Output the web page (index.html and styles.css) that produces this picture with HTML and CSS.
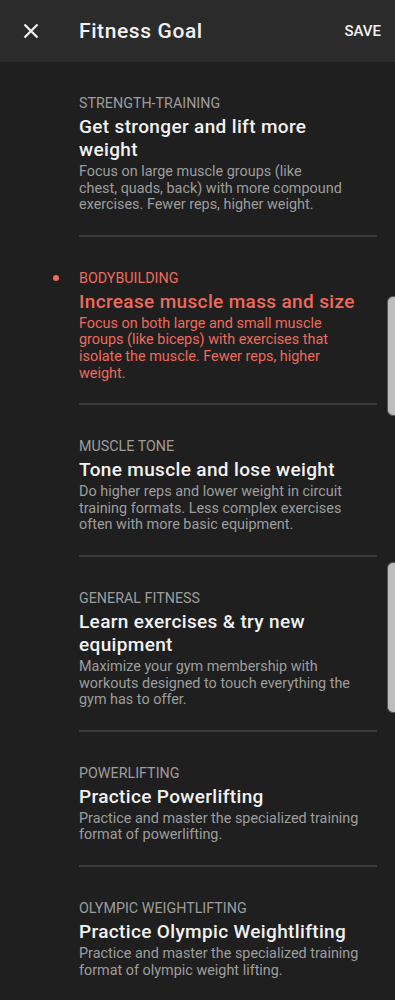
FILE: index.html
```html
<!DOCTYPE html>
<html lang="en">
  <head>
    <meta charset="UTF-8" />
    <meta name="viewport" content="width=device-width, initial-scale=1.0" />
    <title>Fitness Goal</title>
    <link rel="stylesheet" href="styles.css">
  </head>
  <body>
    <header class="topbar">
      <button class="close-btn" aria-label="Close">
        <svg width="16" height="16" viewBox="0 0 16 16">
          <path d="M1.5 1.5 L14.5 14.5 M14.5 1.5 L1.5 14.5" stroke="#f2f2f2" stroke-width="2.2" />
        </svg>
      </button>
      <h1 class="topbar-title">Fitness Goal</h1>
      <button class="save-btn">SAVE</button>
    </header>

    <main class="goal-list">
      <div class="goal">
        <div class="goal-category">Strength-Training</div>
        <div class="goal-title">Get stronger and lift more<br>weight</div>
        <p class="goal-desc">Focus on large muscle groups (like<br>chest, quads, back) with more compound<br>exercises. Fewer reps, higher weight.</p>
      </div>

      <div class="goal selected">
        <div class="goal-category">Bodybuilding</div>
        <div class="goal-title">Increase muscle mass and size</div>
        <p class="goal-desc">Focus on both large and small muscle<br>groups (like biceps) with exercises that<br>isolate the muscle. Fewer reps, higher<br>weight.</p>
      </div>

      <div class="goal">
        <div class="goal-category">Muscle Tone</div>
        <div class="goal-title">Tone muscle and lose weight</div>
        <p class="goal-desc">Do higher reps and lower weight in circuit<br>training formats. Less complex exercises<br>often with more basic equipment.</p>
      </div>

      <div class="goal">
        <div class="goal-category">General Fitness</div>
        <div class="goal-title">Learn exercises &amp; try new<br>equipment</div>
        <p class="goal-desc">Maximize your gym membership with<br>workouts designed to touch everything the<br>gym has to offer.</p>
      </div>

      <div class="goal">
        <div class="goal-category">Powerlifting</div>
        <div class="goal-title">Practice Powerlifting</div>
        <p class="goal-desc">Practice and master the specialized training<br>format of powerlifting.</p>
      </div>

      <div class="goal">
        <div class="goal-category">Olympic Weightlifting</div>
        <div class="goal-title">Practice Olympic Weightlifting</div>
        <p class="goal-desc">Practice and master the specialized training<br>format of olympic weight lifting.</p>
      </div>
    </main>

    <div class="edge-tab edge-tab-top"></div>
    <div class="edge-tab edge-tab-bottom"></div>
  </body>
</html>
```

FILE: styles.css
```css
* {
  margin: 0;
  padding: 0;
  box-sizing: border-box;
  font-family: Roboto, "Liberation Sans", sans-serif;
}

:root {
  --bg: #1f1f1f;
  --bar: #2b2b2b;
  --text: #f2f2f2;
  --muted: #9d9d9d;
  --accent: #ee6a5c;
  --line: #3a3a3a;
}

body {
  background: var(--bg);
  color: var(--text);
  overflow-x: hidden;
}

/* Top bar */
.topbar {
  height: 62px;
  background: var(--bar);
  display: flex;
  align-items: center;
  padding: 0 14px 0 23px;
}

.close-btn {
  background: none;
  border: none;
  width: 16px;
  height: 16px;
  display: flex;
}

.topbar-title {
  font-size: 21px;
  font-weight: 500;
  letter-spacing: 0.6px;
  margin-left: 40px;
  flex: 1;
}

.save-btn {
  background: none;
  border: none;
  color: var(--text);
  font-size: 15px;
  font-weight: 500;
}

/* Goal list */
.goal-list {
  padding: 0 18px 0 79px;
}

.goal {
  position: relative;
  padding: 32px 0 21px;
  border-bottom: 2px solid var(--line);
}

.goal-category {
  font-size: 14.3px;
  line-height: 18px;
  text-transform: uppercase;
  color: var(--muted);
}

.goal-title {
  font-size: 19px;
  font-weight: 500;
  letter-spacing: 0.35px;
  line-height: 23px;
  margin-top: 3px;
}

.goal-desc {
  font-size: 14.4px;
  line-height: 16.6px;
  color: var(--muted);
  margin-top: 3px;
  white-space: nowrap;
}

.goal.selected .goal-category,
.goal.selected .goal-title,
.goal.selected .goal-desc {
  color: var(--accent);
}

.goal.selected::before {
  content: "";
  position: absolute;
  left: -26px;
  top: 38px;
  width: 6px;
  height: 6px;
  border-radius: 50%;
  background: var(--accent);
}

/* Edge panels overlaying the right side */
.edge-tab {
  position: absolute;
  right: 0;
  width: 8px;
  background: #bdbdbd;
  border: 1px solid #555;
  border-right: none;
  border-radius: 6px 0 0 6px;
}

.edge-tab-top {
  top: 296px;
  height: 120px;
}

.edge-tab-bottom {
  top: 562px;
  height: 151px;
}
```
